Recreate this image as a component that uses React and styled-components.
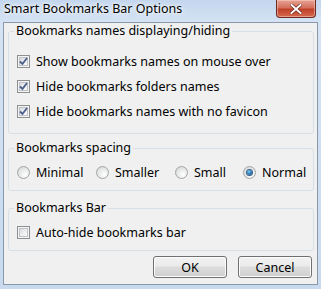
import React from "react";
import styled, { createGlobalStyle } from "styled-components";

const Global = createGlobalStyle`
  html, body { margin: 0; padding: 0; background: #fff; }
  body { font-family: "Noto Sans", "Open Sans", sans-serif; }
`;

const Window = styled.div`
  width: 321px;
  height: 289px;
  box-sizing: border-box;
  display: flex;
  flex-direction: column;
  background: linear-gradient(180deg, #c3d6ee 0px, #d5e3f3 22px, #c9daef 100%);
  padding: 0 3px 4px 3px;
`;

const TitleBar = styled.div`
  height: 22px;
  display: flex;
  align-items: flex-start;
  justify-content: space-between;
  flex: none;
`;

const Title = styled.div`
  font-size: 12.5px;
  line-height: 18px;
  color: #000;
  padding-left: 1px;
  text-shadow: 0 0 6px #fff, 0 0 3px #fff;
`;

const CloseButton = styled.div`
  width: 40px;
  height: 18px;
  margin-right: 2px;
  box-sizing: border-box;
  border: 1px solid #6a2a22;
  border-top: none;
  border-radius: 0 0 4px 4px;
  background: linear-gradient(180deg, #e7a394 0%, #d4705d 45%, #c0412a 55%, #d7684d 100%);
  display: flex;
  align-items: center;
  justify-content: center;
  box-shadow: inset 0 0 0 1px rgba(255, 210, 200, 0.5);
`;

const Client = styled.div`
  flex: 1;
  box-sizing: border-box;
  background: #f0f0f0;
  border: 1px solid #8a98ab;
  display: flex;
  flex-direction: column;
  padding: 1px 3px 0 4px;
`;

const Group = styled.fieldset`
  margin: ${(p) => p.$mt}px 0 0 0;
  padding: 0 6px 0 6px;
  height: ${(p) => p.$h}px;
  box-sizing: border-box;
  border: 1px solid #d5dfe5;
  border-radius: 3px;
  display: flex;
  flex-direction: column;
  min-width: 0;
`;

const Legend = styled.legend`
  font-size: 12.5px;
  line-height: 14px;
  color: #000;
  padding: 0 2px;
  margin-left: -1px;
`;

const Rows = styled.div`
  display: flex;
  flex-direction: column;
  gap: ${(p) => p.$gap || 0}px;
  padding-top: ${(p) => p.$pt}px;
`;

const Row = styled.div`
  display: flex;
  align-items: center;
  height: 20px;
  font-size: 12.5px;
  color: #000;
`;

const RadioRow = styled.div`
  display: flex;
  align-items: center;
  height: 18px;
  margin-top: ${(p) => p.$pt}px;
  font-size: 12.5px;
  color: #000;
`;

const RadioItem = styled.div`
  display: flex;
  align-items: center;
  width: ${(p) => p.$w}px;
  flex: none;
`;

const Box = styled.span`
  width: 13px;
  height: 13px;
  box-sizing: border-box;
  border: 1px solid #8e8f8f;
  background: #f4f4f4;
  display: inline-flex;
  align-items: center;
  justify-content: center;
  margin: 0 6px 0 2px;
  flex: none;
  position: relative;
  &::before {
    content: "";
    position: absolute;
    inset: 1px;
    border: 1px solid #bfc3c8;
    background: linear-gradient(135deg, #d9dcdf 0%, #eef0f2 60%, #fbfbfb 100%);
  }
  svg { position: relative; }
`;

const Radio = styled.span`
  width: 13px;
  height: 13px;
  box-sizing: border-box;
  border-radius: 50%;
  border: 1px solid #a3a5a7;
  background: radial-gradient(circle at 65% 70%, #ffffff 0%, #eceded 40%, #d2d3d4 100%);
  display: inline-flex;
  align-items: center;
  justify-content: center;
  margin: 0 6px 0 2px;
  flex: none;
`;

const Dot = styled.span`
  width: 5px;
  height: 5px;
  border-radius: 50%;
  background: radial-gradient(circle at 40% 35%, #7ad3f6 0%, #2f83c4 45%, #0f3e6d 100%);
  box-shadow: 0 0 0 1px #3b5f82;
`;

const Buttons = styled.div`
  display: flex;
  justify-content: flex-end;
  gap: 11px;
  padding: 5px 2px 0 0;
`;

const Button = styled.div`
  width: 74px;
  height: 22px;
  box-sizing: border-box;
  border: 1px solid #707070;
  border-radius: 3px;
  background: linear-gradient(180deg, #f2f2f2 0%, #ebebeb 45%, #dddddd 50%, #cfcfcf 100%);
  box-shadow: inset 0 0 0 1px #fcfcfc;
  display: flex;
  align-items: center;
  justify-content: center;
  font-size: 12.5px;
  color: #000;
`;

const Check = () => (
  <svg width="9" height="9" viewBox="0 0 9 9">
    <path d="M1 4.5 L3.5 7 L8 1" fill="none" stroke="#4a5d8a" strokeWidth="1.8" />
  </svg>
);

const CheckRow = ({ checked, children }) => (
  <Row>
    <Box>{checked && <Check />}</Box>
    {children}
  </Row>
);

export default function App() {
  return (
    <>
      <Global />
      <Window>
        <TitleBar>
          <Title>Smart Bookmarks Bar Options</Title>
          <CloseButton>
            <svg width="12" height="10" viewBox="0 0 12 10">
              <path d="M1.5 1 L10.5 9 M10.5 1 L1.5 9" stroke="#5a1a10" strokeWidth="3.2" strokeLinecap="square" />
              <path d="M1.5 1 L10.5 9 M10.5 1 L1.5 9" stroke="#fff" strokeWidth="2" strokeLinecap="square" />
            </svg>
          </CloseButton>
        </TitleBar>
        <Client>
          <Group $mt={0} $h={110}>
            <Legend>Bookmarks names displaying/hiding</Legend>
            <Rows $pt={13} $gap={5}>
              <CheckRow checked>Show bookmarks names on mouse over</CheckRow>
              <CheckRow checked>Hide bookmarks folders names</CheckRow>
              <CheckRow checked>Hide bookmarks names with no favicon</CheckRow>
            </Rows>
          </Group>
          <Group $mt={7} $h={50}>
            <Legend>Bookmarks spacing</Legend>
            <RadioRow $pt={8}>
              <RadioItem $w={79}><Radio />Minimal</RadioItem>
              <RadioItem $w={79}><Radio />Smaller</RadioItem>
              <RadioItem $w={68}><Radio />Small</RadioItem>
              <RadioItem $w={70}><Radio><Dot /></Radio>Normal</RadioItem>
            </RadioRow>
          </Group>
          <Group $mt={10} $h={50}>
            <Legend>Bookmarks Bar</Legend>
            <Rows $pt={7}>
              <CheckRow>Auto-hide bookmarks bar</CheckRow>
            </Rows>
          </Group>
          <Buttons>
            <Button>OK</Button>
            <Button>Cancel</Button>
          </Buttons>
        </Client>
      </Window>
    </>
  );
}
